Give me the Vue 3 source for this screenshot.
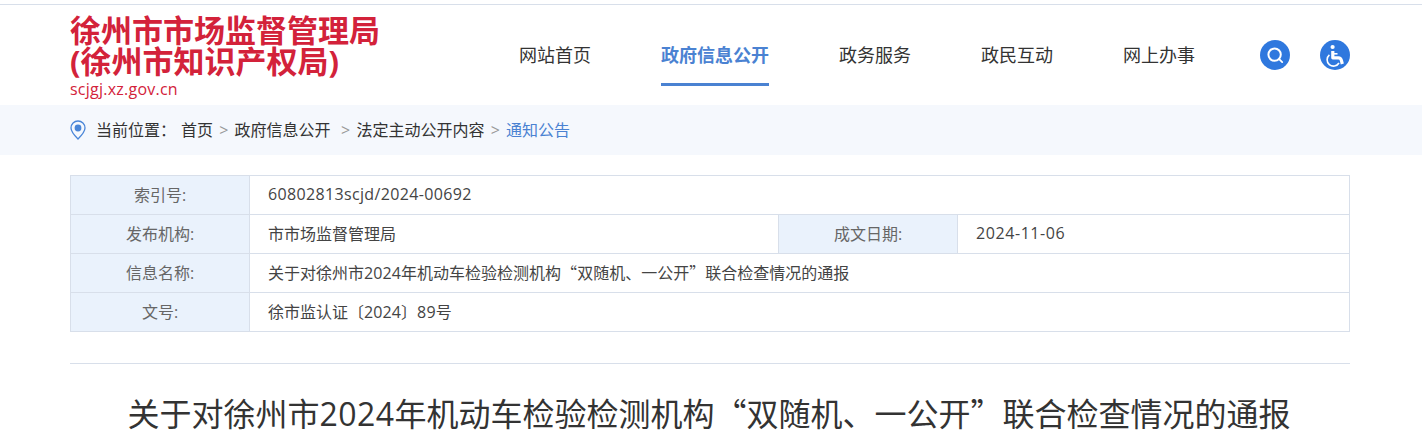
<template>
  <div class="page" lang="zh-CN">
    <header class="head">
      <div class="brand">
        <h1 class="brand-name">徐州市市场监督管理局<br />(徐州市知识产权局)</h1>
        <div class="brand-url">scjgj.xz.gov.cn</div>
      </div>
      <nav class="nav">
        <a v-for="item in navItems" :key="item.label" class="nav-item" :class="{ active: item.active }">{{ item.label }}</a>
      </nav>
      <div class="tools">
        <svg class="tool" viewBox="0 0 30 30">
          <circle cx="15" cy="15" r="15" fill="#2f78de" />
          <circle cx="14.6" cy="14.6" r="6.2" fill="none" stroke="#fff" stroke-width="2" />
          <path d="M19.2 19.2l3 2.9" stroke="#fff" stroke-width="1.8" stroke-linecap="round" />
        </svg>
        <svg class="tool" viewBox="0 0 30 30">
          <circle cx="15" cy="15" r="15" fill="#2f78de" />
          <circle cx="12.6" cy="7" r="2.1" fill="#fff" />
          <path d="M12.8 11v6.8h5.6c1.6 0 2.6 1 3 2.6l.9 3.6" fill="none" stroke="#fff" stroke-width="3.2" stroke-linejoin="round" />
          <path d="M13 13.8h4.5" fill="none" stroke="#fff" stroke-width="1.6" />
          <path d="M9.4 14.8a6.4 6.4 0 1 0 9.6 8.2" fill="none" stroke="#fff" stroke-width="1.6" />
        </svg>
      </div>
    </header>

    <div class="crumb-bar">
      <div class="crumbs">
        <svg class="pin" viewBox="0 0 16 20">
          <path d="M8 1a7 7 0 0 0-7 7c0 4 4 8 7 11 3-3 7-7 7-11a7 7 0 0 0-7-7z" fill="none" stroke="#4a86d8" stroke-width="1.3" />
          <circle cx="8" cy="8" r="3.4" fill="#4a86d8" />
        </svg>
        <span class="here">当前位置：</span>
        <span>首页</span><i class="sep">&gt;</i>
        <span>政府信息公开</span><i class="sep wide">&gt;</i>
        <span>法定主动公开内容</span><i class="sep">&gt;</i>
        <span class="current">通知公告</span>
      </div>
    </div>

    <main class="main">
      <table class="meta">
        <colgroup>
          <col class="c-label" /><col class="c-value" /><col class="c-label" /><col />
        </colgroup>
        <tbody>
          <tr><th>索引号:</th><td colspan="3"><span class="index">60802813scjd/2024-00692</span></td></tr>
          <tr><th>发布机构:</th><td>市市场监督管理局</td><th>成文日期:</th><td><span class="date">2024-11-06</span></td></tr>
          <tr><th>信息名称:</th><td colspan="3">关于对徐州市<span class="num">2024</span>年机动车检验检测机构<span class="q">“</span>双随机、一公开<span class="q">”</span>联合检查情况的通报</td></tr>
          <tr><th>文号:</th><td colspan="3">徐市监认证〔<span class="num">2024</span>〕<span class="num">89</span>号</td></tr>
        </tbody>
      </table>
      <div class="rule"></div>
      <h2 class="title">关于对徐州市<span class="num-lg">2024</span>年机动车检验检测机构<span class="q">“</span>双随机、一公开<span class="q">”</span>联合检查情况的通报</h2>
    </main>
  </div>
</template>

<script setup>
const navItems = [
  { label: '网站首页' },
  { label: '政府信息公开', active: true },
  { label: '政务服务' },
  { label: '政民互动' },
  { label: '网上办事' }
]
</script>

<style>
html, body { margin: 0; background: #fff; overflow: hidden; }
</style>

<style scoped>
.page {
  width: 1422px;
  height: 442px;
  overflow: hidden;
  background: #fff;
  font-family: "Open Sans", "Noto Sans CJK SC", sans-serif;
  color: #333;
  border-top: 1px solid #d8dfea;
  margin-top: 4px;
  box-sizing: border-box;
}
.head {
  display: flex;
  align-items: flex-start;
  height: 100px;
  padding: 0 72px 0 70px;
}
.brand { width: 449px; flex: none; padding-top: 10px; }
.brand-name {
  margin: 0;
  font-size: 31px;
  line-height: 31px;
  font-weight: 700;
  color: #d3223a;
  white-space: nowrap;
}
.brand-url { font-size: 16px; letter-spacing: 0.24px; line-height: 22px; color: #d3223a; margin-top: 1px; }
.nav { display: flex; gap: 70px; padding-top: 29px; }
.nav-item {
  font-size: 18px;
  line-height: 42px;
  height: 52px;
  color: #333;
  box-sizing: border-box;
}
.nav-item.active {
  color: #4a82d2;
  font-weight: 700;
  border-bottom: 3px solid #4a82d2;
}
.tools { display: flex; gap: 30px; padding-top: 35px; margin-left: auto; }
.tool { width: 30px; height: 30px; display: block; }
.crumb-bar { height: 50px; background: #f5f8fd; }
.crumbs {
  display: flex;
  align-items: center;
  height: 50px;
  padding-left: 70px;
  font-size: 16px;
  line-height: 48px;
  color: #333;
  white-space: nowrap;
}
.pin { width: 16px; height: 20px; margin-right: 10px; }
.here { width: 85px; }
.sep { font-style: normal; color: #999; width: 21.5px; text-align: center; }
.sep.wide { width: 26px; padding-left: 4px; box-sizing: border-box; }
.current { color: #4a82d2; }
.main { padding: 20px 72px 0 70px; }
.meta {
  width: 1280px;
  border-collapse: collapse;
  table-layout: fixed;
  font-size: 16px;
  color: #444;
}
.c-label { width: 179px; }
.c-value { width: 529px; }
.meta th, .meta td {
  border: 1px solid #d8dfea;
  height: 39px;
  padding: 0 0 2px;
  box-sizing: border-box;
}
.meta th {
  background: #eaf2fc;
  font-weight: 400;
  color: #666;
  text-align: center;
}
.meta td { padding-left: 18px; text-align: left; }
.index { letter-spacing: 0.35px; }
.date { letter-spacing: 0.58px; }
.num { letter-spacing: 0.12px; }
.num-lg { letter-spacing: 0.45px; }
.q { font-family: "Noto Sans CJK SC", sans-serif; }
.rule { height: 1px; background: #d8dfea; margin-top: 31px; }
.title {
  margin: 23px 0 0;
  padding-right: 2px;
  font-size: 32px;
  line-height: 50px;
  font-weight: 400;
  text-align: center;
  color: #333;
  white-space: nowrap;
}
</style>
